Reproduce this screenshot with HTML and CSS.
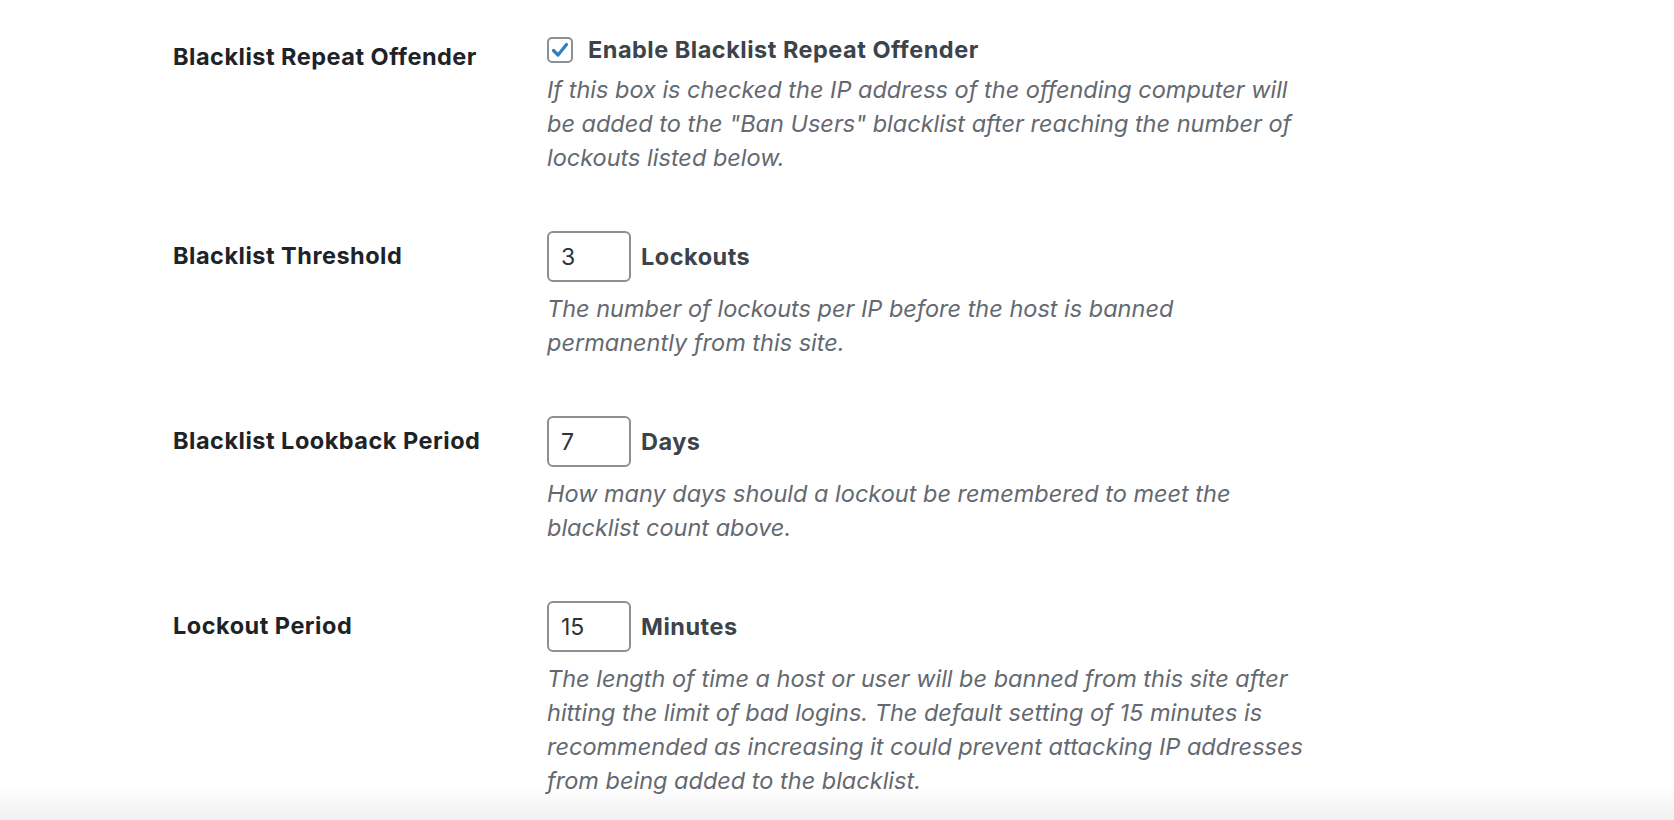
FILE: index.html
```html
<!DOCTYPE html>
<html lang="en">
<head>
    <meta charset="UTF-8">
    <meta name="viewport" content="width=device-width, initial-scale=1.0">
    <title>Blacklist Settings</title>
    <link rel="stylesheet" href="styles.css">
</head>
<body>

<div class="form-table">
    <div class="form-row">
        <div class="row-label">Blacklist Repeat Offender</div>
        <div class="row-field">
            <label class="check-line">
                <span class="checkbox">
                    <svg viewBox="0 0 26 26" width="26" height="26">
                        <path d="M6.5 13.5 L11 18 L19.5 7.5" fill="none" stroke="#2f7fc1" stroke-width="3.2" stroke-linecap="round" stroke-linejoin="round"/>
                    </svg>
                </span>
                <span class="field-text">Enable Blacklist Repeat Offender</span>
            </label>
            <p class="description first">If this box is checked the IP address of the offending computer will be added to the "Ban Users" blacklist after reaching the number of lockouts listed below.</p>
        </div>
    </div>

    <div class="form-row">
        <div class="row-label">Blacklist Threshold</div>
        <div class="row-field">
            <div class="input-line">
                <input class="small-text" type="text" value="3">
                <span class="field-text">Lockouts</span>
            </div>
            <p class="description">The number of lockouts per IP before the host is banned permanently from this site.</p>
        </div>
    </div>

    <div class="form-row">
        <div class="row-label">Blacklist Lookback Period</div>
        <div class="row-field">
            <div class="input-line">
                <input class="small-text" type="text" value="7">
                <span class="field-text">Days</span>
            </div>
            <p class="description">How many days should a lockout be remembered to meet the blacklist count above.</p>
        </div>
    </div>

    <div class="form-row">
        <div class="row-label">Lockout Period</div>
        <div class="row-field">
            <div class="input-line">
                <input class="small-text" type="text" value="15">
                <span class="field-text">Minutes</span>
            </div>
            <p class="description">The length of time a host or user will be banned from this site after hitting the limit of bad logins. The default setting of 15 minutes is recommended as increasing it could prevent attacking IP addresses from being added to the blacklist.</p>
        </div>
    </div>
</div>

</body>
</html>
```

FILE: styles.css
```css
html, body {
    height: 100%;
}

body {
    margin: 0;
    font-family: Inter, "Noto Sans", sans-serif;
    font-size: 23.5px;
    color: #1d2327;
    background: linear-gradient(to bottom, #ffffff 0, #ffffff calc(100% - 34px), #f0f0f1 100%);
    overflow: hidden;
}

.form-table {
    display: flex;
    flex-direction: column;
    gap: 56px;
    padding: 32px 0 0 173px;
}

.form-row {
    display: grid;
    grid-template-columns: 374px 1fr;
}

.row-label {
    padding-top: 8px;
    line-height: 34px;
    font-weight: 700;
    letter-spacing: 0.5px;
    color: #1d2327;
}

.check-line {
    display: flex;
    align-items: center;
    gap: 15px;
    height: 34px;
}

.checkbox {
    display: block;
    width: 26px;
    height: 26px;
    box-sizing: border-box;
    border: 2px solid #8c8f94;
    border-radius: 5px;
    margin-top: 2px;
}

.checkbox svg {
    display: block;
    margin: -2px;
}

.field-text {
    font-weight: 700;
    letter-spacing: 0.5px;
    color: #3c434a;
}

.input-line {
    display: flex;
    align-items: center;
    gap: 10px;
}

.small-text {
    width: 84px;
    height: 51px;
    box-sizing: border-box;
    padding: 0 12px;
    border: 2px solid #8c8f94;
    border-radius: 6px;
    font-family: inherit;
    font-size: 23px;
    color: #2c3338;
    background: #fff;
    outline: none;
}

.description {
    margin: 10px 0 0;
    max-width: 765px;
    line-height: 34px;
    font-style: italic;
    color: #646970;
}

.description.first {
    margin-top: 7px;
}
```
